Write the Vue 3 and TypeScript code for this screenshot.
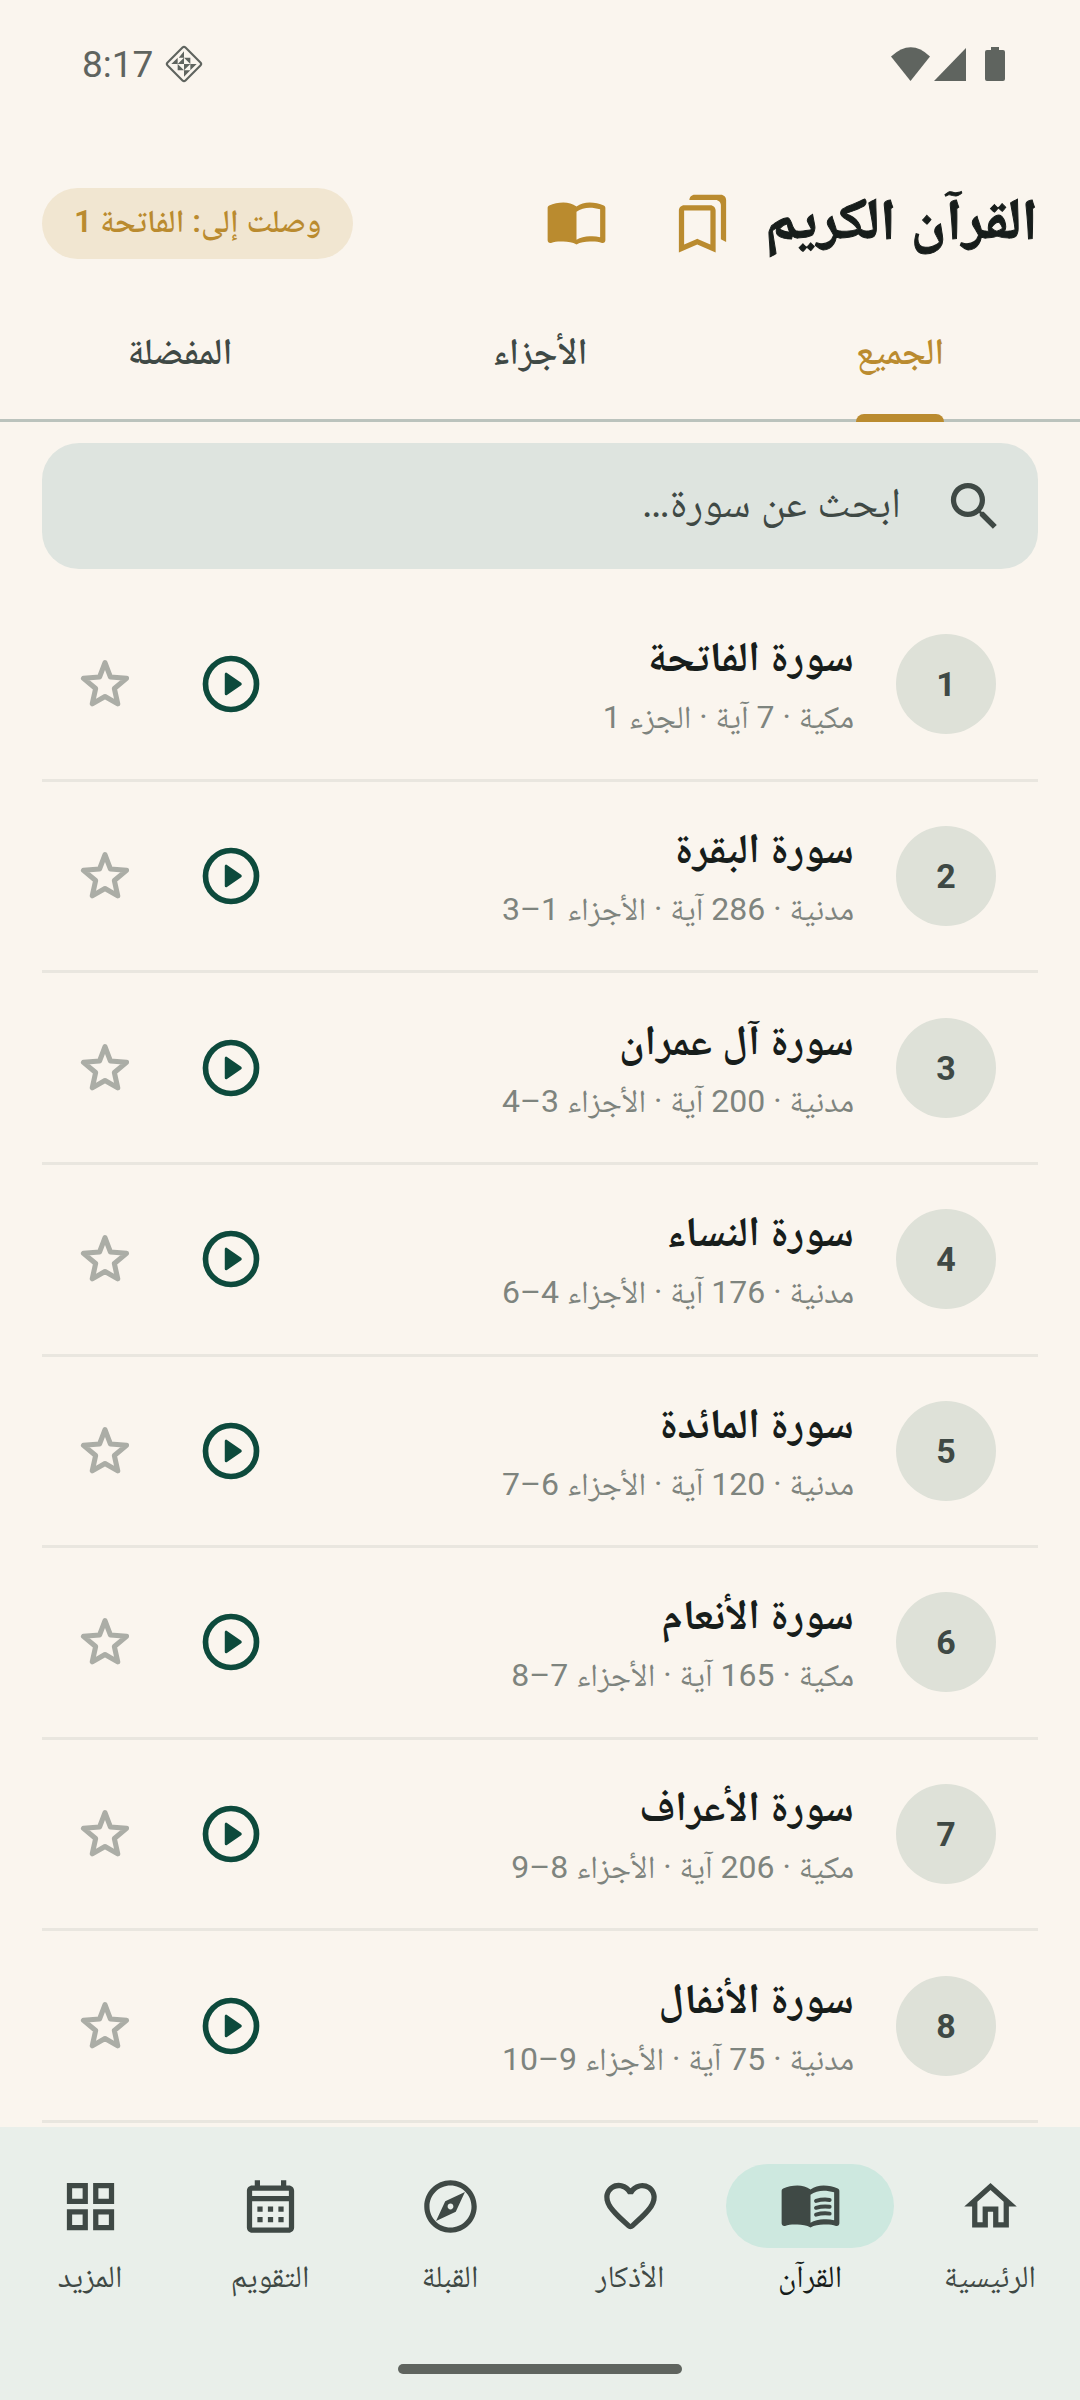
<script setup lang="ts">
import { ref } from 'vue'

interface Surah {
  id: number
  name: string
  origin: string
  verses: number
  juz: string
}

const surahs: Surah[] = [
  { id: 1, name: 'سورة الفاتحة', origin: 'مكية', verses: 7, juz: 'الجزء 1' },
  { id: 2, name: 'سورة البقرة', origin: 'مدنية', verses: 286, juz: 'الأجزاء 1–3' },
  { id: 3, name: 'سورة آل عمران', origin: 'مدنية', verses: 200, juz: 'الأجزاء 3–4' },
  { id: 4, name: 'سورة النساء', origin: 'مدنية', verses: 176, juz: 'الأجزاء 4–6' },
  { id: 5, name: 'سورة المائدة', origin: 'مدنية', verses: 120, juz: 'الأجزاء 6–7' },
  { id: 6, name: 'سورة الأنعام', origin: 'مكية', verses: 165, juz: 'الأجزاء 7–8' },
  { id: 7, name: 'سورة الأعراف', origin: 'مكية', verses: 206, juz: 'الأجزاء 8–9' },
  { id: 8, name: 'سورة الأنفال', origin: 'مدنية', verses: 75, juz: 'الأجزاء 9–10' },
]

const tabs = ['الجميع', 'الأجزاء', 'المفضلة']
const activeTab = ref(0)
const query = ref('')

const bookPath =
  'M12 5.5C10.600 4.500 8.800 4 7 4S3.100 4.400 1.600 5.100C1.200 5.300 1 5.700 1 6.100V18.400c0 .7.600 1.200 1.300 1C3.700 18.900 5.400 18.800 7 18.900c1.700 0 3.600.3 5 1.100 1.400-.8 3.300-1.100 5-1.100 1.600-.1 3.300 0 4.700.5.700.2 1.300-.3 1.300-1V6.100c0-.4-.2-.8-.6-1C20.900 4.400 18.800 4 17 4s-3.600.5-5 1.500zM21 17.200c-1.300-.3-2.700-.4-4-.3-1.700.1-3.600.5-5 1.300V7.500C13.400 6.500 15.300 6 17 6c1.300 0 2.700.2 4 .6z'

const navItems = [
  { id: 'home', label: 'الرئيسية', path: 'M12 5.69l5 4.5V18h-2v-6H9v6H7v-7.81l5-4.5M12 3L2 12h3v8h6v-6h2v6h6v-8h3L12 3z' },
  { id: 'quran', label: 'القرآن', path: bookPath },
  { id: 'azkar', label: 'الأذكار', path: 'M19.66 3.99c-2.64-1.8-5.9-.96-7.66 1.1-1.76-2.06-5.02-2.91-7.66-1.1-1.4.96-2.28 2.58-2.34 4.29-.14 3.88 3.3 6.99 8.55 11.76l.1.09c.76.69 1.93.69 2.69-.01l.11-.1c5.25-4.76 8.68-7.87 8.55-11.75-.06-1.7-.94-3.32-2.34-4.28zM12.1 18.55l-.1.1-.1-.1C7.14 14.24 4 11.39 4 8.5 4 6.5 5.5 5 7.5 5c1.54 0 3.04.99 3.57 2.36h1.87C13.46 5.99 14.96 5 16.5 5c2 0 3.5 1.5 3.5 3.5 0 2.89-3.14 5.74-7.9 10.05z' },
  { id: 'qibla', label: 'القبلة', path: 'M12 2C6.48 2 2 6.48 2 12s4.48 10 10 10 10-4.48 10-10S17.52 2 12 2zm0 18c-4.41 0-8-3.59-8-8s3.59-8 8-8 8 3.59 8 8-3.59 8-8 8zm-5.5-2.5l7.51-3.49L17.5 6.5 9.99 9.99 6.5 17.5zm5.5-6.6c.61 0 1.1.49 1.1 1.1s-.49 1.1-1.1 1.1-1.1-.49-1.1-1.1.49-1.1 1.1-1.1z' },
  { id: 'calendar', label: 'التقويم', path: 'M19 4h-1V2h-2v2H8V2H6v2H5c-1.11 0-1.99.9-1.99 2L3 20c0 1.1.89 2 2 2h14c1.1 0 2-.9 2-2V6c0-1.1-.9-2-2-2zm0 16H5V10h14v10zm0-12H5V6h14v2zM9 14H7v-2h2v2zm4 0h-2v-2h2v2zm4 0h-2v-2h2v2zm-8 4H7v-2h2v2zm4 0h-2v-2h2v2zm4 0h-2v-2h2v2z' },
  { id: 'more', label: 'المزيد', path: 'M3 3v8h8V3H3zm6 6H5V5h4v4zm-6 4v8h8v-8H3zm6 6H5v-4h4v4zm4-16v8h8V3h-8zm6 6h-4V5h4v4zm-6 4v8h8v-8h-8zm6 6h-4v-4h4v4z' },
]
</script>

<template>
  <div class="app" dir="rtl">
    <div class="status" dir="ltr">
      <span class="clock">8:17</span>
      <svg class="notif" viewBox="0 0 36 36" aria-hidden="true">
        <rect x="6" y="6" width="24" height="24" rx="2" transform="rotate(45 18 18)" fill="none" stroke="currentColor" stroke-width="2" />
        <path fill="currentColor" d="M18 6v6h-5zM6 18l6-6v6zM12 18l6-6v6zM18 12h6v6zM24 18h6l-6 6zM18 24h6l-6 6zM12 18v6h6zM18 18h6l-6 6z" />
      </svg>
      <div class="signals">
        <svg viewBox="0 0 39 34" width="39" height="34" aria-hidden="true"><path fill="currentColor" d="M0 9.500Q20-9 39 9.500L19.500 34z" /></svg>
        <svg viewBox="0 0 32 34" width="32" height="34" aria-hidden="true"><path fill="currentColor" d="M0 34L32 1v33z" /></svg>
        <svg class="battery" viewBox="0 0 20 34" width="20" height="34" aria-hidden="true"><path fill="currentColor" d="M6 0h8v3h4q2 0 2 2v27q0 2-2 2H2q-2 0-2-2V5q0-2 2-2h4z" /></svg>
      </div>
    </div>

    <header class="header">
      <h1>القرآن الكريم</h1>
      <button class="icon-btn" type="button" aria-label="العلامات المرجعية">
        <svg class="i-24" viewBox="0 0 24 24"><path fill="currentColor" d="M15 7v12.970l-4.210-1.810-.79-.34-.79.34L5 19.970V7h10m4-6H8.990C7.890 1 7 1.900 7 3h10c1.100 0 2 .9 2 2v13l2 1V3c0-1.100-.9-2-2-2zm-4 4H5c-1.100 0-2 .9-2 2v16l7-3 7 3V7c0-1.100-.9-2-2-2z" /></svg>
      </button>
      <button class="icon-btn" type="button" aria-label="المصحف">
        <svg class="i-24" viewBox="0 0 24 24"><path fill="currentColor" :d="bookPath" /></svg>
      </button>
      <button class="progress" type="button">وصلت إلى: الفاتحة 1</button>
    </header>

    <nav class="tabs">
      <button v-for="(tab, i) in tabs" :key="tab" type="button" :class="{ active: activeTab === i }" @click="activeTab = i">
        <span>{{ tab }}</span>
      </button>
    </nav>

    <label class="search">
      <svg class="i-24" viewBox="0 0 24 24" aria-hidden="true"><path fill="currentColor" d="M15.500 14h-.79l-.28-.27A6.471 6.471 0 0 0 16 9.500 6.500 6.500 0 1 0 9.500 16c1.610 0 3.090-.59 4.230-1.570l.27.28v.79l5 4.990L20.490 19l-4.990-5zm-6 0C7.010 14 5 11.990 5 9.500S7.010 5 9.500 5 14 7.010 14 9.500 11.990 14 9.500 14z" /></svg>
      <input v-model="query" type="text" aria-label="ابحث عن سورة" placeholder="ابحث عن سورة…" />
    </label>

    <ul class="list">
      <li v-for="s in surahs" :key="s.id">
        <span class="num">{{ s.id }}</span>
        <div class="info">
          <h2>{{ s.name }}</h2>
          <p>{{ s.origin }} · {{ s.verses }} آية · {{ s.juz }}</p>
        </div>
        <button class="icon-btn play" type="button" aria-label="تشغيل">
          <svg class="i-26" viewBox="0 0 24 24"><circle cx="12" cy="12" r="9" fill="none" stroke="currentColor" stroke-width="2" /><path d="M10.300 8.500v7l5-3.500z" fill="currentColor" stroke="currentColor" stroke-width="1" stroke-linejoin="round" /></svg>
        </button>
        <button class="icon-btn star" type="button" aria-label="إضافة إلى المفضلة">
          <svg class="i-26" viewBox="0 0 24 24"><path d="M12 4.500l1.900 5 5.700.5-4.300 3.600 1.200 5.400L12 16.400 7.500 19l1.200-5.400L4.400 10l5.700-.5z" fill="none" stroke="currentColor" stroke-width="1.800" stroke-linejoin="round" /></svg>
        </button>
      </li>
    </ul>

    <footer class="bottom">
      <nav class="nav">
        <a v-for="item in navItems" :key="item.id" href="#" :class="{ current: item.id === 'quran' }">
          <span class="pill">
            <svg class="i-24" viewBox="0 0 24 24" aria-hidden="true">
              <path fill="currentColor" :d="item.path" />
              <path v-if="item.id === 'quran'" d="M14.100 9.900q2.600-.8 5.200-.4M14.100 12.500q2.600-.8 5.200-.4M14.100 15.100q2.600-.8 5.200-.4" fill="none" stroke="currentColor" stroke-width="1.500" stroke-linecap="round" />
            </svg>
          </span>
          <span class="label">{{ item.label }}</span>
        </a>
      </nav>
      <div class="handle"></div>
    </footer>
  </div>
</template>

<style>
body {
  margin: 0;
  background: #faf5ee;
}
</style>

<style scoped>
.app {
  min-height: 100vh;
  display: flex;
  flex-direction: column;
  background: #faf5ee;
  color: #171d1b;
  font-family: Roboto, 'Noto Naskh Arabic', 'DejaVu Sans', sans-serif;
}

button {
  border: 0;
  padding: 0;
  background: none;
  color: inherit;
  font: inherit;
  cursor: pointer;
}

svg {
  display: block;
}

.status {
  display: flex;
  align-items: center;
  height: 128px;
  padding: 0 75px 0 82px;
  color: #5f645f;
}

.clock {
  font-size: 37px;
}

.notif {
  width: 38px;
  height: 38px;
  margin-left: 12px;
}

.signals {
  display: flex;
  gap: 4px;
  margin-left: auto;
}

.battery {
  margin-left: 15px;
}

.header {
  display: flex;
  align-items: center;
  height: 190px;
  padding: 0 42px;
}

h1 {
  margin: 0;
  padding-bottom: 8px;
  font-size: 58px;
  line-height: 80px;
  font-weight: 700;
  -webkit-text-stroke: 1px currentColor;
}

.icon-btn {
  display: grid;
  place-items: center;
  width: 126px;
  height: 126px;
  flex: none;
}

.header .icon-btn {
  color: #ba8b2f;
}

.i-24 {
  width: 63px;
  height: 63px;
}

.i-26 {
  width: 68px;
  height: 68px;
}

.progress {
  margin-inline-start: auto;
  height: 71px;
  padding: 4px 32px 0;
  border-radius: 36px;
  background: #f1e6d1;
  color: #ba8b2f;
  font-size: 32px;
  font-weight: 600;
}

.tabs {
  display: flex;
  height: 101px;
  border-bottom: 3px solid #bbc3bd;
}

.tabs button {
  flex: 1;
  display: flex;
  justify-content: center;
  align-items: flex-end;
  margin-bottom: -3px;
  color: #3f4945;
  font-size: 37px;
  line-height: 52px;
  font-weight: 600;
}

.tabs span {
  position: relative;
  padding-bottom: 44px;
}

.tabs .active {
  color: #ba8b2f;
}

.tabs .active span::after {
  content: '';
  position: absolute;
  inset: auto 0 0;
  height: 8px;
  border-radius: 8px 8px 0 0;
  background: #ba8b2f;
}

.search {
  display: flex;
  align-items: center;
  gap: 42px;
  height: 126px;
  margin: 21px 42px;
  padding: 0 32px;
  border-radius: 37px;
  background: #dee4df;
  color: #3f4945;
}

input {
  flex: 1;
  min-width: 0;
  border: 0;
  outline: 0;
  padding: 0 0 8px;
  background: none;
  color: inherit;
  font: inherit;
  font-size: 42px;
}

input::placeholder {
  color: inherit;
  opacity: 1;
}

.list {
  flex: 1;
  display: flex;
  flex-direction: column;
  margin: 0;
  padding: 0 42px 4px;
  list-style: none;
}

li {
  flex: 1;
  min-height: 180px;
  display: flex;
  align-items: center;
  padding-inline-start: 42px;
  border-bottom: 3px solid #e9e6df;
}

.num {
  display: grid;
  place-items: center;
  width: 100px;
  height: 100px;
  border-radius: 50%;
  background: #dee1d8;
  color: #3f4945;
  font-size: 34px;
  font-weight: 700;
}

.info {
  flex: 1;
  margin-inline-start: 42px;
  padding-top: 6px;
}

h2 {
  margin: 0;
  font-size: 42px;
  line-height: 60px;
  font-weight: 700;
}

p {
  margin: 0;
  font-size: 32px;
  line-height: 60px;
  color: #7e847e;
}

.play {
  color: #0d4a3c;
}

.star {
  color: #abada6;
}

.bottom {
  height: 273px;
  display: flex;
  flex-direction: column;
  justify-content: space-between;
  align-items: center;
  background: #e9efea;
}

.nav {
  display: flex;
  width: 100%;
  padding-top: 37px;
}

.nav a {
  flex: 1;
  display: flex;
  flex-direction: column;
  align-items: center;
  gap: 8px;
  color: #3f4945;
  font-size: 31px;
  line-height: 42px;
  text-decoration: none;
}

.pill {
  display: grid;
  place-items: center;
  width: 168px;
  height: 84px;
  border-radius: 42px;
}

.current .pill {
  background: #cde8df;
}

.current .label {
  color: #171d1b;
}

.handle {
  width: 284px;
  height: 10px;
  margin-bottom: 26px;
  border-radius: 5px;
  background: #5f645f;
}
</style>
